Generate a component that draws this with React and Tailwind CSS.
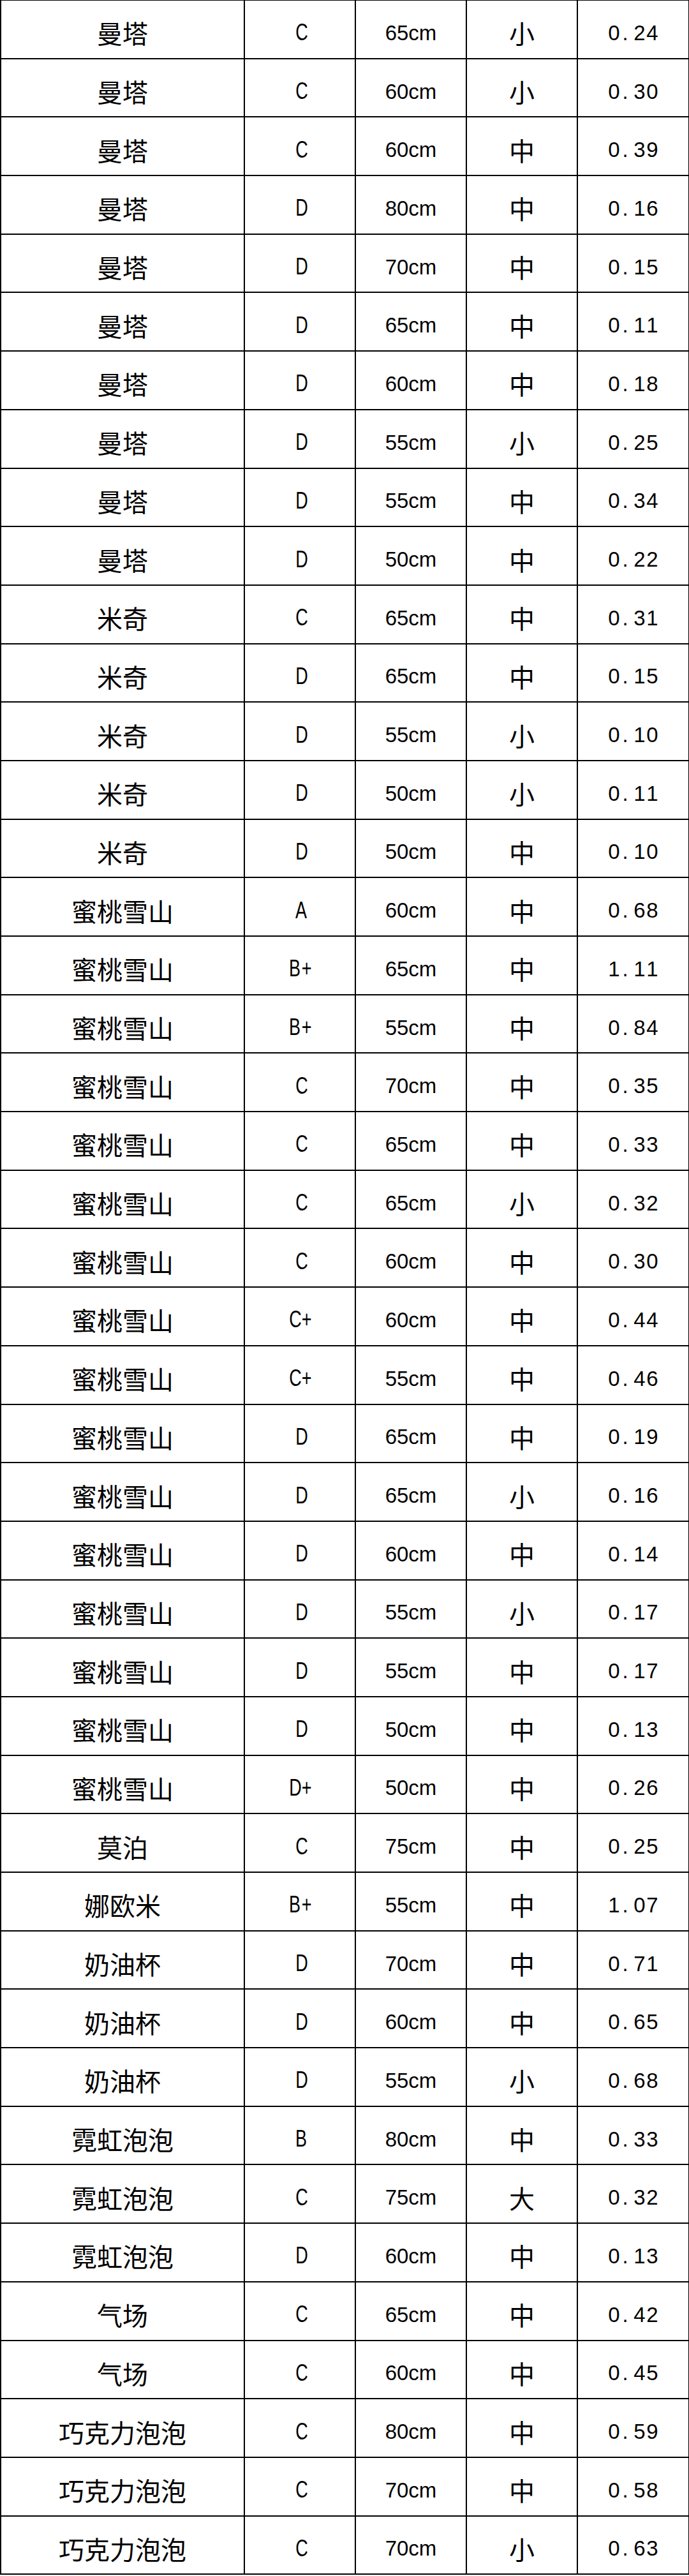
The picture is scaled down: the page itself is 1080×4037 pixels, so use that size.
import React from "react";

const rows = [
  ["曼塔", "C", "65cm", "小", "0.24"],
  ["曼塔", "C", "60cm", "小", "0.30"],
  ["曼塔", "C", "60cm", "中", "0.39"],
  ["曼塔", "D", "80cm", "中", "0.16"],
  ["曼塔", "D", "70cm", "中", "0.15"],
  ["曼塔", "D", "65cm", "中", "0.11"],
  ["曼塔", "D", "60cm", "中", "0.18"],
  ["曼塔", "D", "55cm", "小", "0.25"],
  ["曼塔", "D", "55cm", "中", "0.34"],
  ["曼塔", "D", "50cm", "中", "0.22"],
  ["米奇", "C", "65cm", "中", "0.31"],
  ["米奇", "D", "65cm", "中", "0.15"],
  ["米奇", "D", "55cm", "小", "0.10"],
  ["米奇", "D", "50cm", "小", "0.11"],
  ["米奇", "D", "50cm", "中", "0.10"],
  ["蜜桃雪山", "A", "60cm", "中", "0.68"],
  ["蜜桃雪山", "B+", "65cm", "中", "1.11"],
  ["蜜桃雪山", "B+", "55cm", "中", "0.84"],
  ["蜜桃雪山", "C", "70cm", "中", "0.35"],
  ["蜜桃雪山", "C", "65cm", "中", "0.33"],
  ["蜜桃雪山", "C", "65cm", "小", "0.32"],
  ["蜜桃雪山", "C", "60cm", "中", "0.30"],
  ["蜜桃雪山", "C+", "60cm", "中", "0.44"],
  ["蜜桃雪山", "C+", "55cm", "中", "0.46"],
  ["蜜桃雪山", "D", "65cm", "中", "0.19"],
  ["蜜桃雪山", "D", "65cm", "小", "0.16"],
  ["蜜桃雪山", "D", "60cm", "中", "0.14"],
  ["蜜桃雪山", "D", "55cm", "小", "0.17"],
  ["蜜桃雪山", "D", "55cm", "中", "0.17"],
  ["蜜桃雪山", "D", "50cm", "中", "0.13"],
  ["蜜桃雪山", "D+", "50cm", "中", "0.26"],
  ["莫泊", "C", "75cm", "中", "0.25"],
  ["娜欧米", "B+", "55cm", "中", "1.07"],
  ["奶油杯", "D", "70cm", "中", "0.71"],
  ["奶油杯", "D", "60cm", "中", "0.65"],
  ["奶油杯", "D", "55cm", "小", "0.68"],
  ["霓虹泡泡", "B", "80cm", "中", "0.33"],
  ["霓虹泡泡", "C", "75cm", "大", "0.32"],
  ["霓虹泡泡", "D", "60cm", "中", "0.13"],
  ["气场", "C", "65cm", "中", "0.42"],
  ["气场", "C", "60cm", "中", "0.45"],
  ["巧克力泡泡", "C", "80cm", "中", "0.59"],
  ["巧克力泡泡", "C", "70cm", "中", "0.58"],
  ["巧克力泡泡", "C", "70cm", "小", "0.63"],
];

const cjk = "font-['Noto_Sans_CJK_SC',sans-serif] text-[40px] leading-none";
const sans = "font-['Liberation_Sans',Arial,sans-serif] leading-none";
const cell = "flex items-center justify-center pt-[11px]";

function Grade({ v }) {
  return (
    <span className="flex">
      {v.split("").map((ch, i) => (
        <span key={i} className="inline-block w-[20px] text-center">
          <span className="inline-block scale-x-75 text-[36px]">{ch}</span>
        </span>
      ))}
    </span>
  );
}

function Price({ v }) {
  return (
    <span className="flex">
      {v.split("").map((ch, i) =>
        ch === "." ? (
          <span key={i} className="inline-block w-[20px] text-left pl-[3px]">
            .
          </span>
        ) : (
          <span key={i} className="inline-block w-[20px] text-center">
            {ch}
          </span>
        )
      )}
    </span>
  );
}

export default function App() {
  return (
    <div className="w-[1080px] bg-white text-black border-t border-l-2 border-r border-black">
      {rows.map((r, i) => (
        <div
          key={i}
          className="grid grid-cols-[382px_174px_174px_174px_173px] h-[91.7px] border-b-2 border-black"
        >
          <div className={`${cell} border-r-2 border-black ${cjk}`}>{r[0]}</div>
          <div className={`${cell} border-r-2 border-black ${sans}`}>
            <Grade v={r[1]} />
          </div>
          <div className={`${cell} border-r-2 border-black ${sans} text-[33px]`}>{r[2]}</div>
          <div className={`${cell} border-r-2 border-black ${cjk}`}>{r[3]}</div>
          <div className={`${cell} ${sans} text-[33px]`}>
            <Price v={r[4]} />
          </div>
        </div>
      ))}
    </div>
  );
}
